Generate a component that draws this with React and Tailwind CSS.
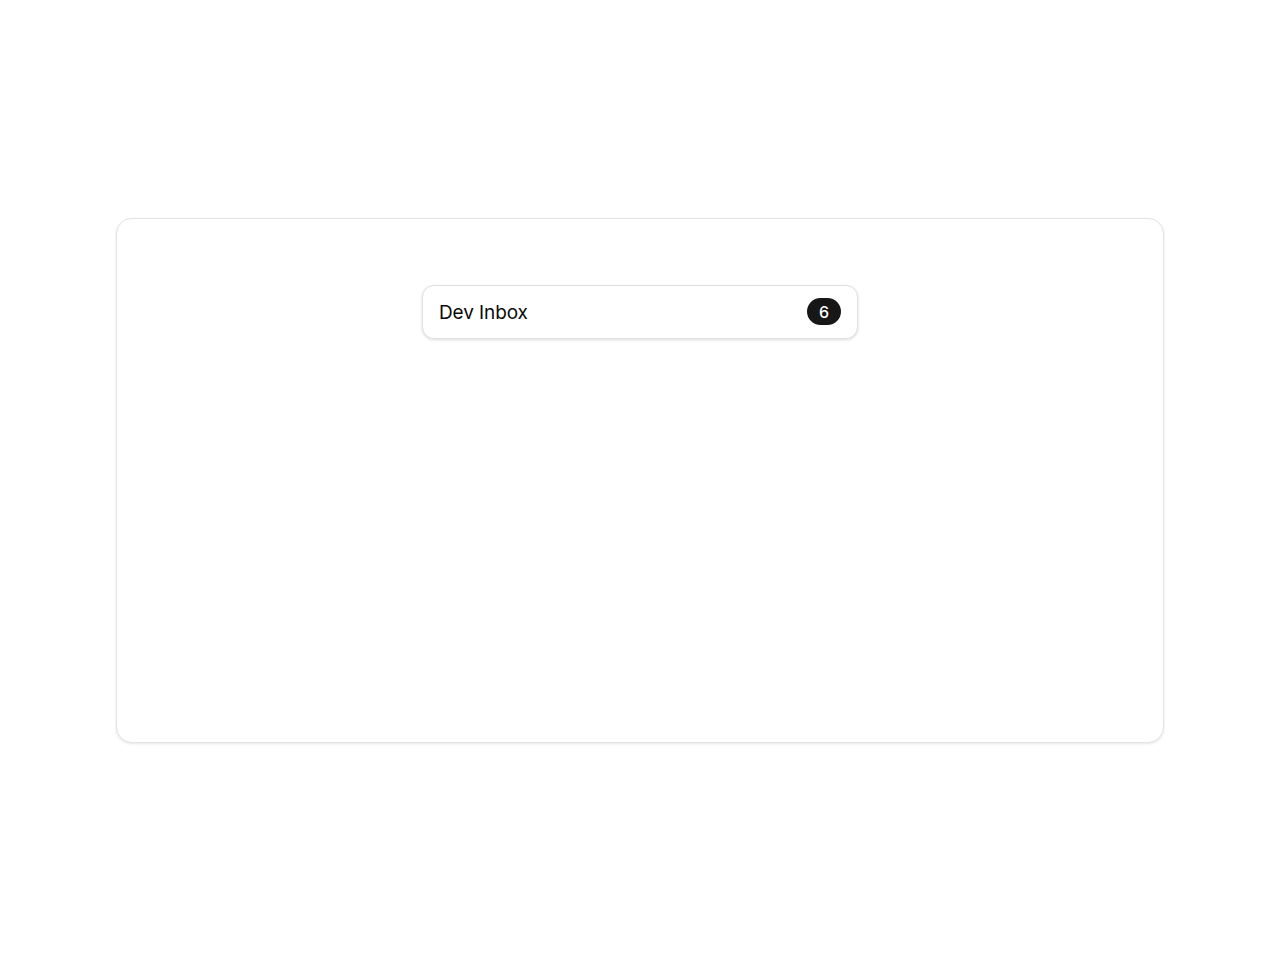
export default function App() {
  return (
    <div className="min-h-screen bg-white flex items-center justify-center" style={{ fontFamily: 'Inter, "Noto Sans", sans-serif' }}>
      <div className="w-[1048px] h-[525px] rounded-2xl border border-[#e3e3e3] bg-white shadow-[0_1px_3px_rgba(0,0,0,0.1)] flex justify-center pt-[66px]">
        <div className="w-[436px] h-[54px] rounded-xl border border-[#e0e0e0] bg-white shadow-[0_1px_3px_rgba(0,0,0,0.14)] flex items-center justify-between pl-4 pr-4">
          <span className="pt-[3px] text-[19px] text-[#0a0a0a] tracking-[-0.1px]">Dev Inbox</span>
          <span className="h-[27px] min-w-[34px] px-2 rounded-full bg-[#171717] text-white text-[16px] font-medium flex items-center justify-center">6</span>
        </div>
      </div>
    </div>
  );
}
